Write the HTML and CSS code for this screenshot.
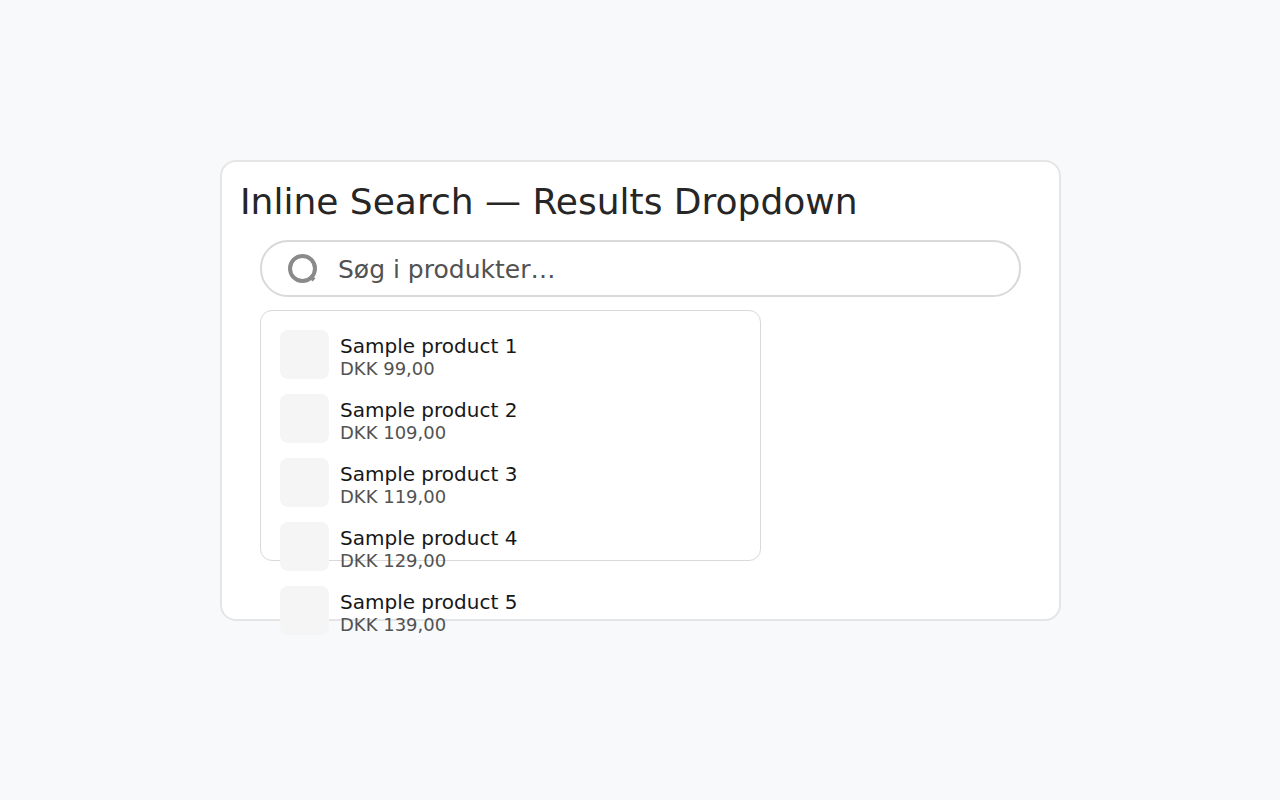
FILE: index.html
```html
<!DOCTYPE html>
<html lang="da">
<head>
  <meta charset="utf-8">
  <meta name="viewport" content="width=device-width, initial-scale=1">
  <title>Inline Search</title>
  <link rel="stylesheet" href="styles.css">
</head>
<body>
  <main class="page">
    <section class="card">
      <h1 class="card-title">Inline Search — Results Dropdown</h1>
      <label class="search">
        <svg class="search-icon" viewBox="0 0 30 30" fill="none" stroke="#8a8a8a" aria-hidden="true">
          <circle cx="14.5" cy="14.5" r="12.5" stroke-width="4"/>
          <path d="M22 22 26 26" stroke-width="4"/>
        </svg>
        <input class="search-input" type="text" placeholder="Søg i produkter…" aria-label="Søg i produkter">
      </label>
      <ul class="results">
        <li class="result"><span class="thumb"></span><div class="info"><span class="name">Sample product 1</span><span class="price">DKK 99,00</span></div></li>
        <li class="result"><span class="thumb"></span><div class="info"><span class="name">Sample product 2</span><span class="price">DKK 109,00</span></div></li>
        <li class="result"><span class="thumb"></span><div class="info"><span class="name">Sample product 3</span><span class="price">DKK 119,00</span></div></li>
        <li class="result"><span class="thumb"></span><div class="info"><span class="name">Sample product 4</span><span class="price">DKK 129,00</span></div></li>
        <li class="result"><span class="thumb"></span><div class="info"><span class="name">Sample product 5</span><span class="price">DKK 139,00</span></div></li>
      </ul>
    </section>
  </main>
</body>
</html>
```

FILE: styles.css
```css
* {
  box-sizing: border-box;
}

body {
  margin: 0;
  background: #f8f9fb;
  font-family: "DejaVu Sans", sans-serif;
}

.page {
  padding: 160px 219px 40px 220px;
}

.card {
  padding: 18px 18px 58px;
  background: #fff;
  border: 2px solid #e5e5e5;
  border-radius: 16px;
}

.card-title {
  margin: 0 0 16px;
  color: #262626;
  font-size: 36px;
  font-weight: 400;
  line-height: 44px;
}

.search {
  display: flex;
  align-items: center;
  gap: 20px;
  height: 57px;
  margin: 0 20px;
  padding: 0 26px;
  border: 2px solid #d9d9d9;
  border-radius: 28px;
}

.search-icon {
  flex: none;
  width: 30px;
  height: 30px;
}

.search-input {
  flex: 1;
  min-width: 0;
  padding: 2px 0 0;
  border: 0;
  outline: 0;
  background: none;
  color: #525252;
  font-family: inherit;
  font-size: 25px;
  line-height: 30px;
}

.search-input::placeholder {
  color: #525252;
  opacity: 1;
}

/* The panel keeps its height; long result lists run past its edge. */
.results {
  display: flex;
  flex-direction: column;
  gap: 15px;
  max-width: 501px;
  height: 251px;
  margin: 13px 20px 0;
  padding: 19px;
  border: 1px solid #d9d9d9;
  border-radius: 12px;
  list-style: none;
}

.result {
  display: flex;
  flex: none;
  align-items: flex-start;
  gap: 11px;
}

.thumb {
  width: 49px;
  height: 49px;
  background: #f5f5f5;
  border-radius: 8px;
}

.info {
  display: flex;
  flex-direction: column;
  padding-top: 4px;
}

.name {
  color: #171717;
  font-size: 20px;
  line-height: 24px;
}

.price {
  color: #525252;
  font-size: 18px;
  line-height: 21px;
}
```
